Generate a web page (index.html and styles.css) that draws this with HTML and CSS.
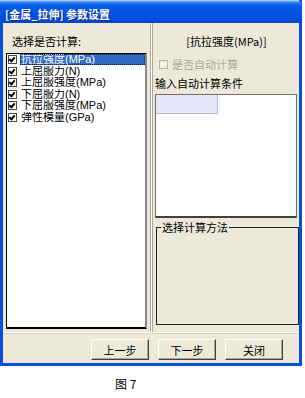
FILE: index.html
```html
<!DOCTYPE html>
<html lang="zh-CN">
  <head>
    <meta charset="UTF-8" />
    <meta name="viewport" content="width=device-width, initial-scale=1.0" />
    <title>参数设置</title>
    <link rel="stylesheet" href="styles.css">
  </head>
  <body>
    <div class="window">
      <div class="titlebar">[金属_拉伸] 参数设置</div>

      <div class="client">
        <div class="left">
          <p class="label">选择是否计算:</p>
          <div class="list">
            <div class="item selected"><span class="check on"></span><span class="name">抗拉强度(MPa)</span></div>
            <div class="item"><span class="check on"></span><span class="name">上屈服力(N)</span></div>
            <div class="item"><span class="check on"></span><span class="name">上屈服强度(MPa)</span></div>
            <div class="item"><span class="check on"></span><span class="name">下屈服力(N)</span></div>
            <div class="item"><span class="check on"></span><span class="name">下屈服强度(MPa)</span></div>
            <div class="item"><span class="check on"></span><span class="name">弹性模量(GPa)</span></div>
          </div>
        </div>

        <div class="right">
          <p class="heading">[抗拉强度(MPa)]</p>
          <div class="auto">
            <span class="check off"></span>
            <span>是否自动计算</span>
          </div>
          <p class="label2">输入自动计算条件</p>
          <div class="input">
            <div class="cell"></div>
          </div>
          <fieldset class="group">
            <legend>选择计算方法</legend>
          </fieldset>
        </div>
      </div>

      <div class="buttons">
        <button class="btn">上一步</button>
        <button class="btn">下一步</button>
        <button class="btn">关闭</button>
      </div>
    </div>

    <p class="caption">图 7</p>
  </body>
</html>
```

FILE: styles.css
```css
body {
  margin: 0;
  padding: 0;
  background: #ffffff;
  font-family: "Noto Sans CJK SC", "DejaVu Sans", sans-serif;
  font-size: 11px;
  color: #000000;
}
p {
  margin: 0;
}
.window {
  width: 296px;
  border-left: 3px solid #0a4fdc;
  border-right: 3px solid #0a4fdc;
  border-bottom: 3px solid #0a4fdc;
  background: #ece9d8;
}
.titlebar {
  margin-left: -3px;
  margin-right: -3px;
  height: 23px;
  box-sizing: border-box;
  padding: 8px 0 0 5px;
  line-height: 13px;
  font-weight: bold;
  font-size: 11px;
  color: #ffffff;
  text-shadow: 1px 1px 0 #0a2a8a;
  border-top-right-radius: 6px;
  background: linear-gradient(180deg, #c9dcf7 0px, #3d8af7 2px, #0a5ee8 5px, #0054e3 12px, #0050dc 18px, #0046c8 23px);
}
.client {
  display: flex;
  height: 309px;
  border-bottom: 1px solid #ffffff;
  box-shadow: 0 1px 0 #d8d4c4;
}
.left {
  width: 146px;
  padding: 12px 0 0 3px;
  border-right: 1px solid #aca899;
  box-shadow: 1px 0 0 #ffffff, 2px 0 0 #aca899;
}
.label {
  margin-left: 6px;
  line-height: 13px;
}
.list {
  margin-top: 5px;
  width: 141px;
  height: 276px;
  box-sizing: border-box;
  padding: 0 0 0 1px;
  background: #ffffff;
  border: 1px solid #000000;
  border-right: 2px solid #8a8a8a;
  border-bottom: 2px solid #000000;
}
.item {
  display: flex;
  align-items: center;
  height: 11.5px;
  line-height: 11px;
  font-family: "Liberation Sans", "Noto Sans CJK SC", sans-serif;
}
.check {
  width: 7px;
  height: 7px;
  margin-right: 3px;
  flex: none;
  border: 1px solid #4a4a4a;
  background: #ffffff;
  position: relative;
}
.check.on::after {
  content: "";
  position: absolute;
  left: 1px;
  top: 0px;
  width: 2px;
  height: 4px;
  border-right: 2px solid #000000;
  border-bottom: 2px solid #000000;
  transform: rotate(40deg);
}
.check.off {
  border-color: #b4b0a0;
  background: #f2f0e6;
}
.name {
  flex: 1;
  height: 11px;
  padding-left: 1px;
  overflow: hidden;
}
.selected .name {
  background: #316ac5;
  color: #ffffff;
  outline: 1px dotted #1a1a40;
  outline-offset: -1px;
}
.right {
  width: 147px;
  margin-left: 3px;
  padding-top: 12px;
}
.heading {
  text-align: center;
  line-height: 13px;
}
.auto {
  display: flex;
  align-items: center;
  margin: 10px 0 0 5px;
  height: 12px;
  color: #aca899;
}
.auto .check {
  margin-right: 4px;
}
.label2 {
  margin-top: 7px;
  margin-left: 1px;
  line-height: 13px;
}
.input {
  margin: 4px 0 0 1px;
  width: 142px;
  height: 124px;
  box-sizing: border-box;
  background: #ffffff;
  border: 1px solid #6e6e6e;
  border-bottom: 2px solid #404040;
}
.cell {
  width: 62px;
  height: 19px;
  box-sizing: border-box;
  background: #e6e6fa;
  border-right: 1px solid #b8b8d8;
  border-bottom: 1px solid #b8b8d8;
}
.group {
  margin: 3px 0 0 2px;
  padding: 0;
  width: 143px;
  height: 104px;
  box-sizing: border-box;
  border: 1px solid #222222;
}
.group legend {
  margin-left: 4px;
  padding: 0 1px;
  line-height: 12px;
}
.buttons {
  display: flex;
  justify-content: flex-end;
  gap: 9px;
  height: 30px;
  padding: 6px 16px 0 0;
  box-sizing: border-box;
}
.btn {
  width: 58px;
  height: 21px;
  padding: 0;
  font-family: inherit;
  font-size: 11px;
  color: #000000;
  background: #ece9d8;
  border: 1px solid;
  border-color: #ffffff #404040 #404040 #ffffff;
  box-shadow: inset -1px -1px 0 #aca899;
}
.caption {
  margin: 11px 0 0 115px;
  font-size: 12px;
  line-height: 14px;
}
```
